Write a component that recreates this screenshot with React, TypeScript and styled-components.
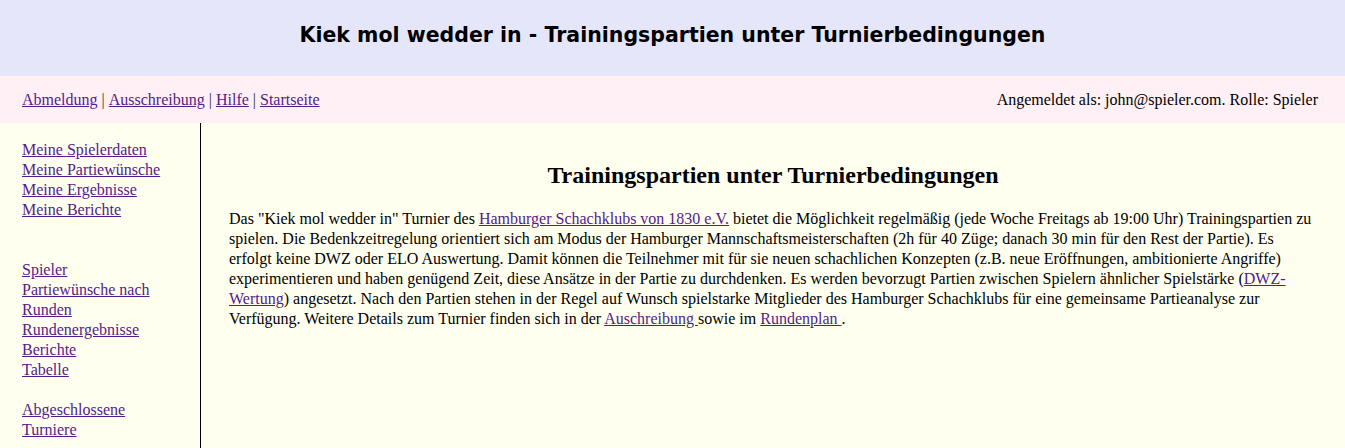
import React from "react";
import styled, { createGlobalStyle } from "styled-components";

const GlobalStyle = createGlobalStyle`
  html, body {
    margin: 0;
    padding: 0;
    background: #fffff0;
  }
  body {
    font-family: "Liberation Serif", "Times New Roman", serif;
    font-size: 16px;
    color: #000;
  }
`;

const Page = styled.div`
  display: flex;
  flex-direction: column;
  min-height: 100vh;
  background: #fffff0;
`;

const Header = styled.header`
  height: 76px;
  background: #e6e6fa;
  display: flex;
  align-items: center;
  justify-content: center;
`;

const Title = styled.h1`
  margin: 0 0 6px 0;
  font-family: "Comic Sans MS", "DejaVu Sans", sans-serif;
  font-weight: bold;
  font-size: 20.5px;
  color: #000;
`;

const NavBar = styled.nav`
  height: 47px;
  background: #fff0f5;
  display: flex;
  align-items: center;
  justify-content: space-between;
  padding: 0 27px 0 22px;
  line-height: 20px;
`;

const NavLinks = styled.div`
  display: flex;
  align-items: baseline;
`;

const Sep = styled.span`
  color: #333;
  padding: 0 4px;
`;

const Link = styled.a`
  color: #551a8b;
  text-decoration: underline;
  cursor: pointer;
`;

const UserInfo = styled.div``;

const Body = styled.div`
  flex: 1;
  display: flex;
  align-items: stretch;
`;

const Sidebar = styled.aside`
  width: 156px;
  flex: none;
  padding: 17px 22px;
  border-right: 1px solid #000;
  line-height: 20px;
`;

const MenuGroup = styled.div<{ $gap: number }>`
  display: flex;
  flex-direction: column;
  align-items: flex-start;
  margin-top: ${(p) => p.$gap}px;
`;

const MenuLink = styled(Link)`
  display: inline;
`;

const Main = styled.main`
  flex: 1;
  padding: 19px 28px;
`;

const Heading = styled.h2`
  text-align: center;
  font-size: 24px;
  font-weight: bold;
  margin: 20px 0;
`;

const Para = styled.p`
  margin: 20px 0;
  line-height: 20px;
`;

const groups: { gap: number; items: string[] }[] = [
  { gap: 0, items: ["Meine Spielerdaten", "Meine Partiewünsche", "Meine Ergebnisse", "Meine Berichte"] },
  { gap: 40, items: ["Spieler", "Partiewünsche nach Runden", "Rundenergebnisse", "Berichte", "Tabelle"] },
  { gap: 20, items: ["Abgeschlossene Turniere"] },
];

export default function App() {
  return (
    <>
      <GlobalStyle />
      <Page>
        <Header>
          <Title>Kiek mol wedder in - Trainingspartien unter Turnierbedingungen</Title>
        </Header>
        <NavBar>
          <NavLinks>
            <Link>Abmeldung</Link>
            <Sep>|</Sep>
            <Link>Ausschreibung</Link>
            <Sep>|</Sep>
            <Link>Hilfe</Link>
            <Sep>|</Sep>
            <Link>Startseite</Link>
          </NavLinks>
          <UserInfo>Angemeldet als: john@spieler.com. Rolle: Spieler</UserInfo>
        </NavBar>
        <Body>
          <Sidebar>
            {groups.map((g, i) => (
              <MenuGroup key={i} $gap={g.gap}>
                {g.items.map((t) => (
                  <MenuLink key={t}>{t}</MenuLink>
                ))}
              </MenuGroup>
            ))}
          </Sidebar>
          <Main>
            <Heading>Trainingspartien unter Turnierbedingungen</Heading>
            <Para>
              Das "Kiek mol wedder in" Turnier des <Link>Hamburger Schachklubs von 1830 e.V.</Link> bietet die
              Möglichkeit regelmäßig (jede Woche Freitags ab 19:00 Uhr) Trainingspartien zu spielen. Die
              Bedenkzeitregelung orientiert sich am Modus der Hamburger Mannschaftsmeisterschaften (2h für 40 Züge;
              danach 30 min für den Rest der Partie). Es erfolgt keine DWZ oder ELO Auswertung. Damit können die
              Teilnehmer mit für sie neuen schachlichen Konzepten (z.B. neue Eröffnungen, ambitionierte Angriffe)
              experimentieren und haben genügend Zeit, diese Ansätze in der Partie zu durchdenken. Es werden
              bevorzugt Partien zwischen Spielern ähnlicher Spielstärke (<Link>DWZ-Wertung</Link>) angesetzt. Nach
              den Partien stehen in der Regel auf Wunsch spielstarke Mitglieder des Hamburger Schachklubs für eine
              gemeinsame Partieanalyse zur Verfügung. Weitere Details zum Turnier finden sich in der{" "}
              <Link>Auschreibung </Link> sowie im <Link>Rundenplan </Link>.
            </Para>
          </Main>
        </Body>
      </Page>
    </>
  );
}
